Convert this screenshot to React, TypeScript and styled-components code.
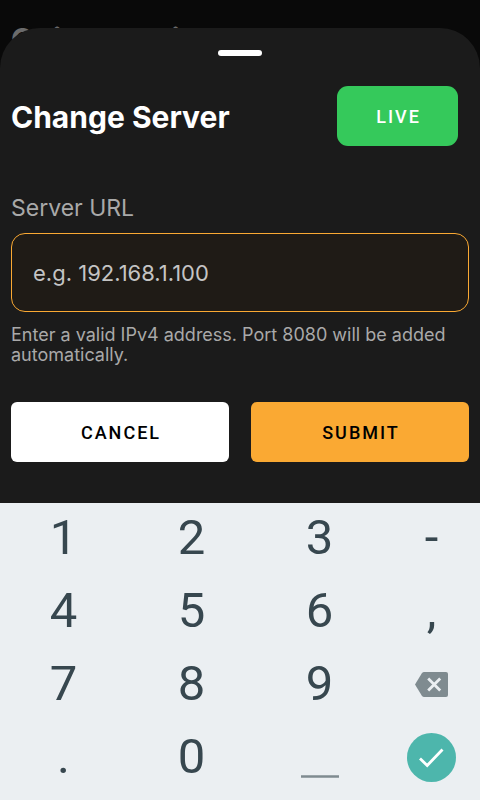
import React from "react";
import styled, { createGlobalStyle } from "styled-components";

const GlobalStyle = createGlobalStyle`
  * { box-sizing: border-box; }
  body {
    margin: 0;
    background: #090909;
    font-family: Inter, "Open Sans", sans-serif;
  }
  button, input { font: inherit; margin: 0; }
`;

const Screen = styled.div`
  display: flex;
  flex-direction: column;
  min-height: 100vh;
  background: #090909;
`;

const PageHeader = styled.header`
  height: 56px;
  padding: 22px 11px 0;
`;

const PageTitle = styled.div`
  font-size: 30px;
  line-height: 34px;
  font-weight: 700;
  color: #6b6b6b;
`;

const Sheet = styled.main`
  position: relative;
  flex: 1;
  margin-top: -28px;
  padding: 22px 11px 40px;
  border-radius: 40px 40px 0 0;
  background: #1b1b1b;
`;

const Handle = styled.div`
  width: 44px;
  height: 6px;
  margin: 0 auto 30px;
  border-radius: 3px;
  background: #fff;
`;

const TitleRow = styled.div`
  display: flex;
  align-items: center;
  justify-content: space-between;
  padding-right: 11px;
`;

const Title = styled.h1`
  margin: 0;
  padding-top: 2px;
  font-size: 30px;
  line-height: 34px;
  font-weight: 700;
  color: #fff;
`;

const LiveButton = styled.button`
  width: 121px;
  height: 60px;
  padding: 2px 0 0 2px;
  border: 0;
  border-radius: 11px;
  background: #35c95b;
  color: #fff;
  font: 500 18px/24px Roboto, sans-serif;
  letter-spacing: 2px;
`;

const Field = styled.div`
  display: flex;
  flex-direction: column;
  margin-top: 48px;
`;

const Label = styled.label`
  font-size: 23px;
  line-height: 28px;
  color: #a9a9a9;
`;

const UrlInput = styled.input`
  width: 100%;
  height: 79px;
  margin-top: 11px;
  padding: 0 21px;
  border: 1px solid #faa933;
  border-radius: 14px;
  outline: 0;
  background: #1f1b16;
  color: #fff;
  font-size: 22px;
  line-height: 28px;
  &::placeholder { color: #c4c4c4; opacity: 1; }
`;

const Hint = styled.p`
  margin: 13px 0 0;
  font-size: 18px;
  line-height: 20px;
  color: #a9a9a9;
`;

const Actions = styled.div`
  display: grid;
  grid-template-columns: 1fr 1fr;
  gap: 22px;
  margin-top: 37px;
`;

const ActionButton = styled.button<{ $primary?: boolean }>`
  height: 60px;
  padding: 2px 0 0 2px;
  border: 0;
  border-radius: 6px;
  background: ${(p) => (p.$primary ? "#faa933" : "#fff")};
  color: #000;
  font: 500 18px/24px Roboto, sans-serif;
  letter-spacing: 2px;
`;

const Keypad = styled.section`
  display: grid;
  grid-template-columns: 4fr 4fr 4fr 3fr;
  grid-auto-rows: 73px;
  padding-bottom: 5px;
  background: #ebeff2;
`;

const Key = styled.button`
  display: flex;
  align-items: center;
  justify-content: center;
  padding: 0 1px 3px 0;
  border: 0;
  background: none;
  color: #37474f;
  font: 400 49px/70px Roboto, sans-serif;
`;

const keys = ["1", "2", "3", "-", "4", "5", "6", ",", "7", "8", "9", "back", ".", "0", "space", "done"];

const labels: Record<string, string> = { back: "Backspace", space: "Space", done: "Done" };

const glyphs: Record<string, React.ReactNode> = {
  back: (
    <svg width="33" height="25" viewBox="0 0 33 25" aria-hidden="true">
      <path d="M9 0H31Q33 0 33 2V23Q33 25 31 25H9Q8 25 7 24L0 12.5L7 1Q8 0 9 0Z" fill="#7f8b90" />
      <path d="M13.2 6.5L25.2 18.5M25.2 6.5L13.2 18.5" stroke="#ebeff2" strokeWidth="2.8" />
    </svg>
  ),
  space: (
    <svg width="40" height="42" viewBox="0 0 40 42" aria-hidden="true">
      <path d="M1 40.5H39" stroke="#7f8b90" strokeWidth="2.6" />
    </svg>
  ),
  done: (
    <svg width="49" height="49" viewBox="0 0 49 49" aria-hidden="true">
      <circle cx="24.5" cy="24.5" r="24.5" fill="#4db6ac" />
      <path d="M13 25.5L20.2 32.5L35.5 16.5" fill="none" stroke="#fff" strokeWidth="2.8" />
    </svg>
  ),
};

export default function App() {
  return (
    <Screen>
      <GlobalStyle />
      <PageHeader>
        <PageTitle>Quick Service</PageTitle>
      </PageHeader>
      <Sheet>
        <Handle />
        <TitleRow>
          <Title>Change Server</Title>
          <LiveButton type="button">LIVE</LiveButton>
        </TitleRow>
        <Field>
          <Label htmlFor="server-url">Server URL</Label>
          <UrlInput id="server-url" type="text" placeholder="e.g. 192.168.1.100" aria-describedby="server-hint" />
          <Hint id="server-hint">Enter a valid IPv4 address. Port 8080 will be added automatically.</Hint>
        </Field>
        <Actions>
          <ActionButton type="button">CANCEL</ActionButton>
          <ActionButton type="button" $primary>SUBMIT</ActionButton>
        </Actions>
      </Sheet>
      <Keypad aria-label="Numeric keypad">
        {keys.map((k) => (
          <Key key={k} type="button" aria-label={labels[k]}>
            {glyphs[k] ?? k}
          </Key>
        ))}
      </Keypad>
    </Screen>
  );
}
